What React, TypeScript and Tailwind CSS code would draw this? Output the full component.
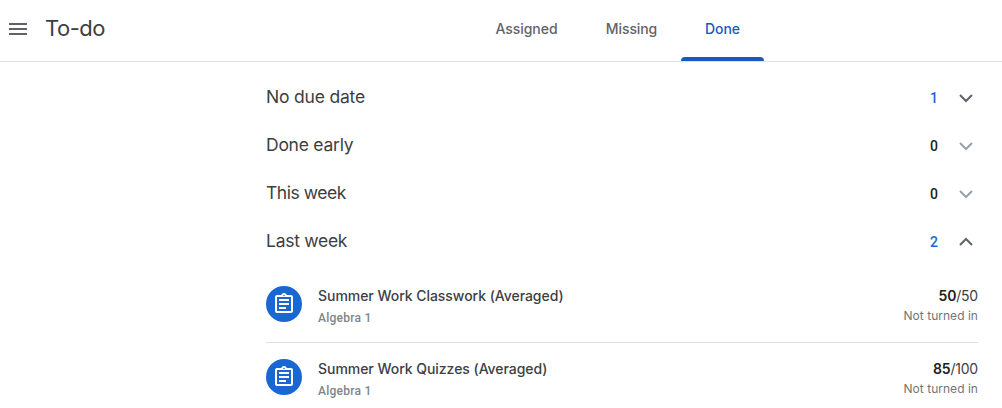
import React, { useState } from 'react';
import { MdMenu, MdOutlineAssignment } from 'react-icons/md';
import clsx from 'clsx';

interface Work {
  title: string;
  course: string;
  earned: number;
  total: number;
  status: string;
}

interface Section {
  label: string;
  labelClass: string;
  count: number;
  items: Work[];
}

const TABS = [
  { label: 'Assigned', className: 'w-[111px] tracking-[-0.05px]' },
  { label: 'Missing', className: 'w-[99px] tracking-[-0.1px]' },
  { label: 'Done', className: 'w-[83px] tracking-[-0.1px]' },
];

const SECTIONS: Section[] = [
  { label: 'No due date', labelClass: 'tracking-[-0.2px]', count: 1, items: [] },
  { label: 'Done early', labelClass: 'tracking-[-0.25px]', count: 0, items: [] },
  { label: 'This week', labelClass: 'tracking-[-0.45px]', count: 0, items: [] },
  {
    label: 'Last week',
    labelClass: 'tracking-[-0.27px]',
    count: 2,
    items: [
      { title: 'Summer Work Classwork (Averaged)', course: 'Algebra 1', earned: 50, total: 50, status: 'Not turned in' },
      { title: 'Summer Work Quizzes (Averaged)', course: 'Algebra 1', earned: 85, total: 100, status: 'Not turned in' },
    ],
  },
];

function Chevron({ up }: { up: boolean }) {
  return (
    <svg width="24" height="24" viewBox="0 0 24 24" fill="none" stroke="currentColor" strokeWidth="2">
      <path d={up ? 'M6 15l6-6 6 6' : 'M6 9l6 6 6-6'} />
    </svg>
  );
}

function WorkRow({ work }: { work: Work }) {
  return (
    <li className="flex h-[73px] items-start border-b border-[#e0e0e0] pt-4 last:border-b-0">
      <div className="flex h-9 w-9 shrink-0 items-center justify-center rounded-full bg-[#1967d2]">
        <MdOutlineAssignment size={24} className="text-white" />
      </div>
      <div className="ml-4 flex-1 whitespace-nowrap">
        <div className="text-[14px] leading-5 font-medium tracking-[-0.04px] text-[#3c4043]">{work.title}</div>
        <div className="mt-1 font-[Roboto,sans-serif] text-[12px] leading-4 font-medium tracking-[0.25px] text-[#80868b]">
          {work.course}
        </div>
      </div>
      <div className="text-right whitespace-nowrap">
        <div className="text-[14px] leading-5 tracking-[-0.2px] text-[#3c4043]">
          <span className="font-semibold text-[#202124]">{work.earned}</span>/{work.total}
        </div>
        <div className="mt-0.5 text-[12px] leading-4 tracking-[0.03px] text-[#757575]">{work.status}</div>
      </div>
    </li>
  );
}

export default function App() {
  const [tab, setTab] = useState('Done');
  const [open, setOpen] = useState('Last week');

  return (
    <div className="h-screen overflow-hidden bg-white font-[Inter,sans-serif]">
      <header className="flex h-[62px] border-b border-[#e0e0e0]">
        <div className="flex h-[57px] w-[471px] items-center pl-1.5">
          <button type="button" aria-label="Main menu" className="text-[#5f6368]">
            <MdMenu size={24} />
          </button>
          <h1 className="ml-[15px] pb-px text-[22px] leading-7 tracking-[-0.5px] text-[#3c4043]">To-do</h1>
        </div>
        <nav className="flex">
          {TABS.map(({ label, className }) => (
            <button
              key={label}
              type="button"
              onClick={() => setTab(label)}
              className={clsx(
                'flex flex-col items-center text-[14px] font-medium',
                className,
                tab === label ? 'text-[#185abc]' : 'text-[#5f6368]'
              )}
            >
              <span className="flex h-[57px] items-center">{label}</span>
              {tab === label && <span className="h-1 w-full rounded-t bg-[#185abc]" />}
            </button>
          ))}
        </nav>
      </header>

      <main className="ml-[266px] w-[712px] pt-3">
        {SECTIONS.map(({ label, labelClass, count, items }) => (
          <section key={label}>
            <button
              type="button"
              onClick={() => setOpen(open === label ? '' : label)}
              className="flex h-12 w-full items-center text-left"
            >
              <h2 className={clsx('flex-1 pb-0.5 text-[17.5px] leading-6 text-[#3c4043]', labelClass)}>{label}</h2>
              <span
                className={clsx(
                  'mr-4 font-[Roboto,sans-serif] text-[14px] font-medium',
                  count > 0 ? 'text-[#1967d2]' : 'text-[#202124]'
                )}
              >
                {count}
              </span>
              <span className={count > 0 ? 'text-[#5f6368]' : 'text-[#9aa0a6]'}>
                <Chevron up={open === label} />
              </span>
            </button>
            {open === label && (
              <ul className="pt-1">
                {items.map((work) => (
                  <WorkRow key={work.title} work={work} />
                ))}
              </ul>
            )}
          </section>
        ))}
      </main>
    </div>
  );
}
